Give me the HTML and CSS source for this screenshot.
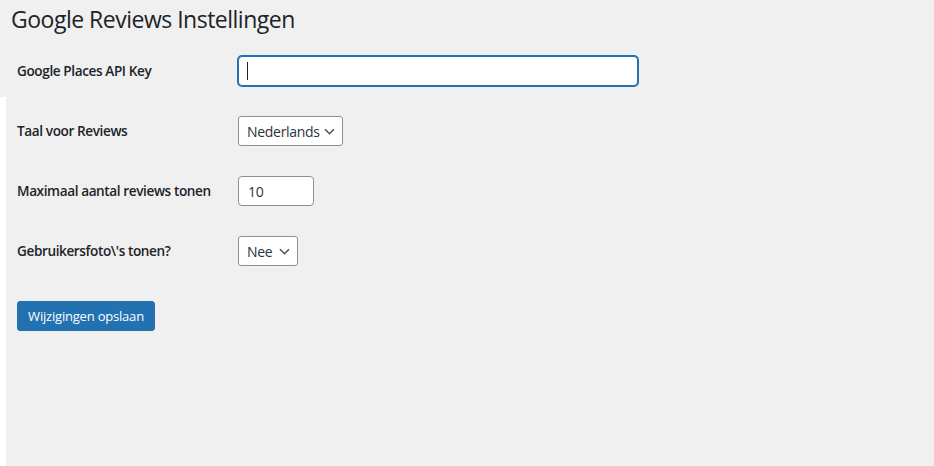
FILE: index.html
```html
<!DOCTYPE html>
<html lang="nl">
<head>
<meta charset="utf-8">
<title>Google Reviews Instellingen</title>
<link rel="stylesheet" href="styles.css">
</head>
<body>
<div class="wrap">
  <h1 class="title">Google Reviews Instellingen</h1>
  <form class="form">
    <div class="row">
      <label class="label" for="api">Google Places API Key</label>
      <div class="field">
        <span class="focus-wrap">
          <input id="api" class="text-input wide focused" type="text" value="">
          <span class="caret"></span>
        </span>
      </div>
    </div>
    <div class="row">
      <label class="label" for="lang">Taal voor Reviews</label>
      <div class="field">
        <span class="select-wrap">
          <select id="lang" class="select lang"><option>Nederlands</option></select>
          <svg class="chev" width="11" height="7" viewBox="0 0 11 7"><path d="M1 1.2l4.5 4.5 4.5-4.5" fill="none" stroke="#50575e" stroke-width="1.6"/></svg>
        </span>
      </div>
    </div>
    <div class="row">
      <label class="label" for="max">Maximaal aantal reviews tonen</label>
      <div class="field">
        <input id="max" class="text-input small" type="text" value="10">
      </div>
    </div>
    <div class="row">
      <label class="label" for="photo">Gebruikersfoto\'s tonen?</label>
      <div class="field">
        <span class="select-wrap">
          <select id="photo" class="select yesno"><option>Nee</option></select>
          <svg class="chev" width="11" height="7" viewBox="0 0 11 7"><path d="M1 1.2l4.5 4.5 4.5-4.5" fill="none" stroke="#50575e" stroke-width="1.6"/></svg>
        </span>
      </div>
    </div>
    <p class="submit"><button type="button" class="button-primary">Wijzigingen opslaan</button></p>
  </form>
</div>
</body>
</html>
```
FILE: styles.css
```css
html, body {
  margin: 0;
  padding: 0;
  min-height: 100%;
}
body {
  min-height: 466px;
  font-family: "Open Sans", "Noto Sans", sans-serif;
  color: #1d2327;
  background:
    linear-gradient(to right, #ffffff 6px, #f0f0f1 6px) 0 97px / 100% 100% no-repeat,
    #f0f0f1;
}
.wrap {
  padding: 0 0 0 17px;
}
.title {
  margin: 0 0 0 -6px;
  padding: 4px 0 7px;
  font-size: 23px;
  font-weight: 400;
  line-height: 30px;
  letter-spacing: -0.5px;
  color: #1d2327;
}
.form {
  margin: 0;
}
.row {
  display: flex;
  align-items: center;
  height: 60px;
}
.label {
  width: 221px;
  font-size: 13.6px;
  font-weight: 600;
  line-height: 1.3;
  letter-spacing: -0.4px;
  color: #1d2327;
}
.field {
  display: flex;
  align-items: center;
}
.text-input, .select {
  box-sizing: border-box;
  height: 30px;
  margin: 0;
  font-family: inherit;
  font-size: 14px;
  letter-spacing: -0.3px;
  color: #2c3338;
  background: #fff;
  border: 1px solid #8c8f94;
  border-radius: 4px;
  padding: 0 8px;
  outline: none;
}
.focus-wrap {
  position: relative;
  display: inline-block;
}
.wide {
  width: 400px;
}
.focused {
  border-color: #2271b1;
  box-shadow: 0 0 0 1px #2271b1;
  caret-color: transparent;
}
.caret {
  position: absolute;
  left: 9px;
  top: 6px;
  width: 1px;
  height: 18px;
  background: #1d2327;
}
.small {
  width: 76px;
  padding-left: 9px;
}
.select-wrap {
  position: relative;
  display: inline-block;
}
.select {
  -webkit-appearance: none;
  appearance: none;
  border-radius: 3px;
  padding: 0 20px 0 8px;
}
.lang { width: 105px; }
.yesno { width: 60px; }
.chev {
  position: absolute;
  right: 8px;
  top: 12px;
  pointer-events: none;
}
.submit {
  margin: 20px 0 0;
  padding: 0;
}
.button-primary {
  box-sizing: border-box;
  width: 138px;
  height: 30px;
  padding: 0 8px;
  font-family: inherit;
  font-size: 13px;
  line-height: 28px;
  letter-spacing: -0.2px;
  color: #fff;
  background: #2271b1;
  border: 1px solid #2271b1;
  border-radius: 3px;
  cursor: pointer;
}
```
